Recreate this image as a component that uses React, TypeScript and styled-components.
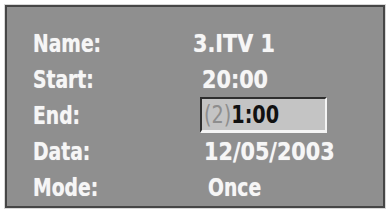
import React from "react";
import styled, { createGlobalStyle, css } from "styled-components";

const Global = createGlobalStyle`
  html, body { margin: 0; padding: 0; background: #ffffff; }
  body { font-family: "DejaVu Sans", sans-serif; }
`;

const osdText = css<{ $squeeze?: number }>`
  display: inline-block;
  font-family: "DejaVu Sans", sans-serif;
  font-weight: bold;
  font-size: 25px;
  transform: scaleX(${(p) => p.$squeeze ?? 0.83});
  transform-origin: left center;
  white-space: nowrap;
`;

const Page = styled.div`
  width: 389px;
  height: 212px;
  padding: 5px 4px 4px 5px;
  box-sizing: border-box;
`;

const Panel = styled.div`
  width: 380px;
  height: 203px;
  box-sizing: border-box;
  background: #8f8f8f;
  border: 2px solid #464646;
  box-shadow: 0 0 0 1px #d8d8d8;
  padding: 18px 0 0 26px;
  display: grid;
  grid-template-columns: 160px 1fr;
  grid-auto-rows: 36px;
  align-items: center;
`;

const Cell = styled.div<{ $indent?: number }>`
  padding-left: ${(p) => p.$indent ?? 0}px;
  display: flex;
  align-items: center;
`;

const Text = styled.span<{ $squeeze?: number }>`
  ${osdText};
  color: #f6f6f6;
  text-shadow: 0 0 1px rgba(255, 255, 255, 0.6);
`;

const EditBox = styled.div`
  width: 127px;
  height: 36px;
  box-sizing: border-box;
  background: #c4c4c4;
  border-top: 2px solid #2e2e2e;
  border-left: 2px solid #2e2e2e;
  border-right: 2px solid #f4f4f4;
  border-bottom: 3px solid #f4f4f4;
  display: flex;
  align-items: center;
  padding-left: 2px;
`;

const EditText = styled.span<{ $squeeze?: number }>`
  ${osdText};
`;

const Hint = styled.span`
  color: #8e8e8e;
  font-weight: normal;
`;

const Strong = styled.span`
  color: #111111;
`;

const LABEL = 0.75;

export default function App() {
  return (
    <>
      <Global />
      <Page>
        <Panel>
          <Cell><Text $squeeze={LABEL}>Name:</Text></Cell>
          <Cell><Text>3.ITV 1</Text></Cell>
          <Cell><Text $squeeze={LABEL}>Start:</Text></Cell>
          <Cell $indent={9}><Text>20:00</Text></Cell>
          <Cell><Text $squeeze={LABEL}>End:</Text></Cell>
          <Cell $indent={7}>
            <EditBox>
              <EditText $squeeze={0.77}>
                <Hint>(2)</Hint>
                <Strong>1:00</Strong>
              </EditText>
            </EditBox>
          </Cell>
          <Cell><Text $squeeze={LABEL}>Data:</Text></Cell>
          <Cell $indent={11}><Text>12/05/2003</Text></Cell>
          <Cell><Text $squeeze={LABEL}>Mode:</Text></Cell>
          <Cell $indent={15}><Text $squeeze={0.75}>Once</Text></Cell>
        </Panel>
      </Page>
    </>
  );
}
